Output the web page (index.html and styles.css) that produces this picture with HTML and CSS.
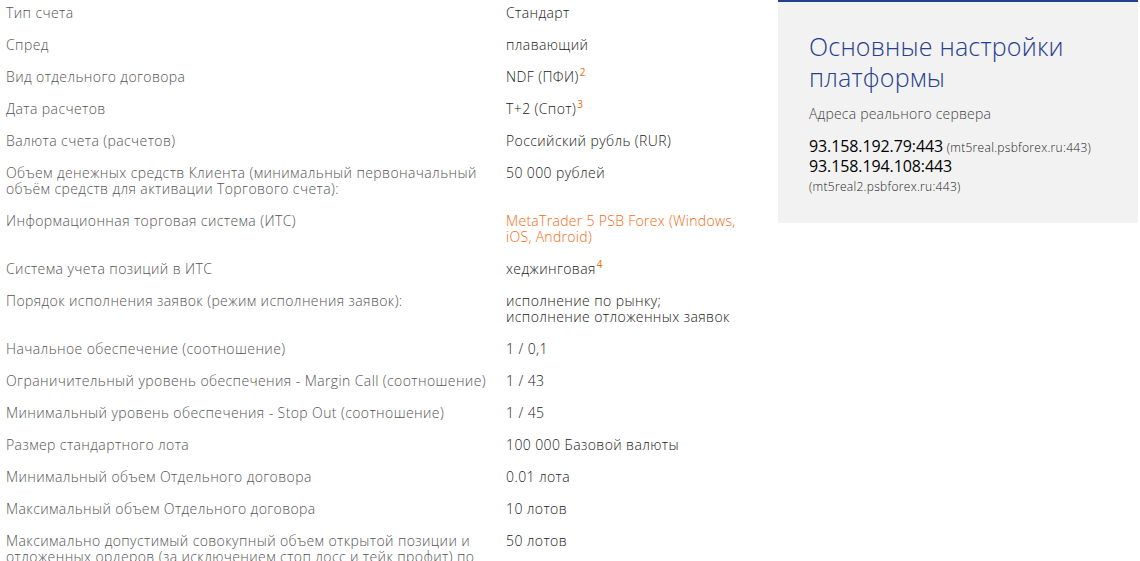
FILE: index.html
```html
<!DOCTYPE html>
<html lang="ru">
<head>
<meta charset="utf-8">
<link rel="stylesheet" href="styles.css">
</head>
<body>
<div class="page">
  <table class="specs">
    <tbody>
      <tr><td class="label">Тип счета</td><td class="value">Стандарт</td></tr>
      <tr><td class="label">Спред</td><td class="value">плавающий</td></tr>
      <tr><td class="label">Вид отдельного договора</td><td class="value">NDF (ПФИ)<sup class="note">2</sup></td></tr>
      <tr><td class="label">Дата расчетов</td><td class="value">T+2 (Спот)<sup class="note">3</sup></td></tr>
      <tr><td class="label">Валюта счета (расчетов)</td><td class="value">Российский рубль (RUR)</td></tr>
      <tr><td class="label">Объем денежных средств Клиента (минимальный первоначальный объём средств для активации Торгового счета):</td><td class="value">50 000 рублей</td></tr>
      <tr><td class="label">Информационная торговая система (ИТС)</td><td class="value"><a class="link" href="#">MetaTrader 5 PSB Forex (Windows, iOS, Android)</a></td></tr>
      <tr><td class="label">Система учета позиций в ИТС</td><td class="value">хеджинговая<sup class="note">4</sup></td></tr>
      <tr><td class="label">Порядок исполнения заявок (режим исполнения заявок):</td><td class="value">исполнение по рынку;<br>исполнение отложенных заявок</td></tr>
      <tr><td class="label">Начальное обеспечение (соотношение)</td><td class="value">1 / 0,1</td></tr>
      <tr><td class="label">Ограничительный уровень обеспечения - Margin Call (соотношение)</td><td class="value">1 / 43</td></tr>
      <tr><td class="label">Минимальный уровень обеспечения - Stop Out (соотношение)</td><td class="value">1 / 45</td></tr>
      <tr><td class="label">Размер стандартного лота</td><td class="value">100 000 Базовой валюты</td></tr>
      <tr><td class="label">Минимальный объем Отдельного договора</td><td class="value">0.01 лота</td></tr>
      <tr><td class="label">Максимальный объем Отдельного договора</td><td class="value">10 лотов</td></tr>
      <tr><td class="label">Максимально допустимый совокупный объем открытой позиции и отложенных ордеров (за исключением стоп лосс и тейк профит) по одному инструменту</td><td class="value">50 лотов</td></tr>
    </tbody>
  </table>
  <aside class="panel">
    <h2 class="panel-title">Основные настройки платформы</h2>
    <p class="panel-sub">Адреса реального сервера</p>
    <p class="servers">
      <span class="ip">93.158.192.79:443</span> <span class="host">(mt5real.psbforex.ru:443)</span><br>
      <span class="ip">93.158.194.108:443</span><br>
      <span class="host">(mt5real2.psbforex.ru:443)</span>
    </p>
  </aside>
</div>
</body>
</html>
```

FILE: styles.css
```css
html, body {
  margin: 0;
  padding: 0;
  background: #fff;
}
body {
  font-family: "Open Sans", "Liberation Sans", sans-serif;
  font-size: 14px;
  color: #333;
  overflow: hidden;
}
.page {
  display: flex;
  align-items: flex-start;
}
.specs {
  width: 760px;
  flex: 0 0 760px;
  border-collapse: collapse;
  margin-top: -3px;
}
.specs td {
  vertical-align: top;
  padding: 8px 0 8px 6px;
  line-height: 16px;
  font-weight: 300;
  letter-spacing: 0.4px;
}
.specs .label {
  width: 494px;
  color: #555;
  padding-right: 0;
}
.specs .value {
  color: #222;
  padding-left: 6px;
  padding-right: 16px;
}
.note {
  color: #f26a10;
  font-size: 10px;
  font-weight: 400;
  line-height: 0;
  vertical-align: 6px;
  margin-left: 1px;
}
.link {
  color: #f26a10;
  font-weight: 350;
  letter-spacing: 0.3px;
  text-decoration: none;
}
.panel {
  margin-left: 18px;
  width: 360px;
  flex: 0 0 360px;
  box-sizing: border-box;
  background: #f2f2f2;
  border-top: 2px solid #27408e;
  padding: 29px 20px 27px 31px;
}
.panel-title {
  margin: 0;
  font-size: 25px;
  line-height: 31px;
  font-weight: 300;
  color: #27408e;
  letter-spacing: 0.2px;
}
.panel-sub {
  margin: 12px 0 0;
  font-size: 14px;
  line-height: 18px;
  font-weight: 300;
  color: #444;
  letter-spacing: 0.2px;
}
.servers {
  margin: 14px 0 0;
  line-height: 19px;
}
.ip {
  font-size: 16px;
  font-weight: 500;
  color: #000;
  letter-spacing: -0.1px;
}
.host {
  font-size: 12px;
  font-weight: 300;
  color: #222;
  letter-spacing: 0.3px;
}
```
